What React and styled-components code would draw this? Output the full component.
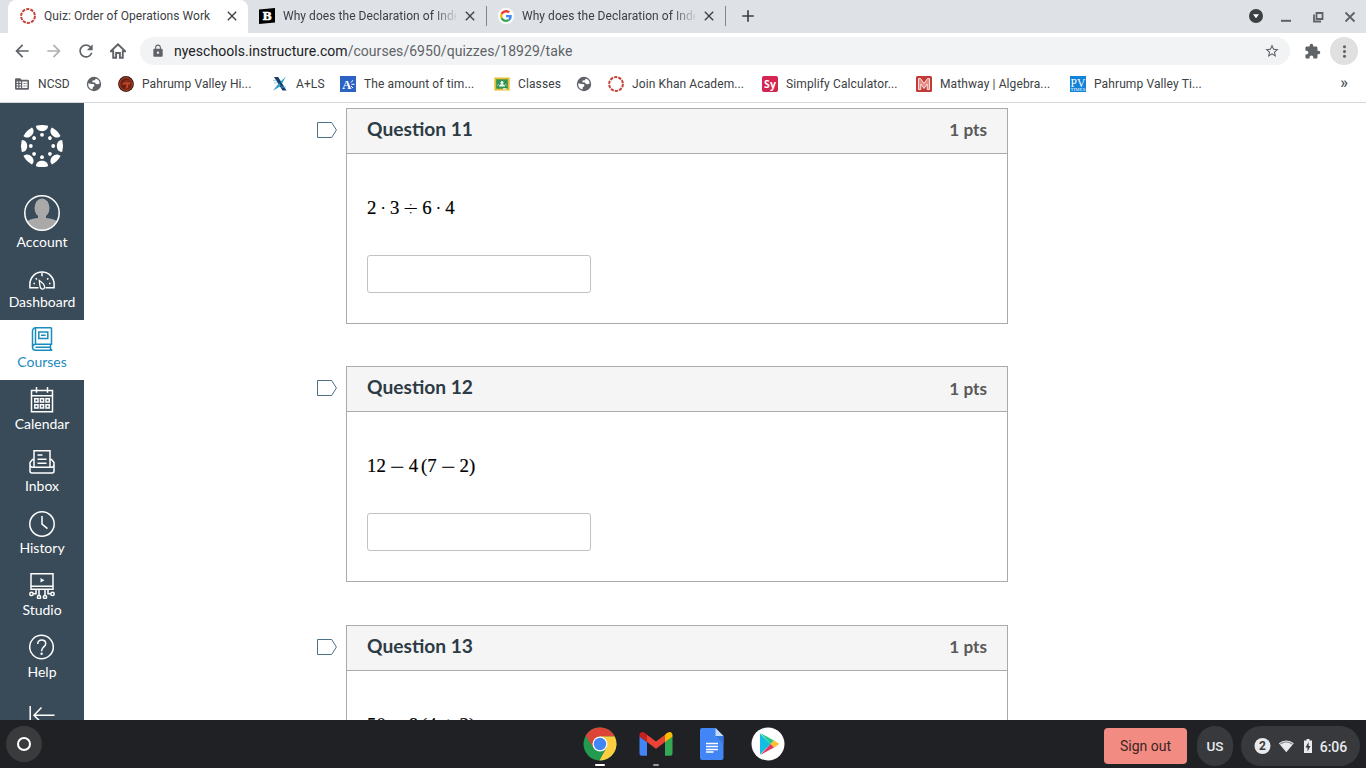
import React from "react";
import styled, { createGlobalStyle } from "styled-components";
import {
  MdAdd,
  MdArrowBack,
  MdArrowForward,
  MdClose,
  MdExtension,
  MdLock,
  MdMoreVert,
  MdRefresh,
  MdStarBorder,
} from "react-icons/md";

const GlobalStyle = createGlobalStyle`
  *, *::after {
    box-sizing: border-box;
  }

  body {
    margin: 0;
    overflow: hidden;
    background: #fff;
    font-family: Roboto, sans-serif;
  }

  svg {
    display: block;
    flex: none;
  }
`;

/* ---------- small icons ---------- */

const RingIcon = () => (
  <svg width="16" height="16" viewBox="0 0 16 16">
    <circle cx="8" cy="8" r="6.900" fill="none" stroke="#c4453c" strokeWidth="2" strokeDasharray="3.300 1.035" />
  </svg>
);

const BrainlyIcon = () => (
  <svg width="16" height="16" viewBox="0 0 16 16">
    <path d="M0 1.600 16 0v14.600L0 16z" fill="#000" />
    <text x="8.200" y="12" fontSize="11" fontWeight="700" fontFamily="DejaVu Serif, serif" textAnchor="middle" fill="#fff" stroke="#fff" strokeWidth=".5">B</text>
  </svg>
);

const GoogleIcon = () => (
  <svg width="16" height="16" viewBox="0 0 16 16">
    <circle cx="8" cy="8" r="8" fill="#fff" />
    <g transform="translate(2 2) scale(.25)">
      <path fill="#EA4335" d="M24 9.500c3.500 0 6.700 1.200 9.200 3.600l6.900-6.900C35.900 2.400 30.500 0 24 0 14.600 0 6.500 5.400 2.600 13.200l8 6.200C12.400 13.700 17.700 9.500 24 9.500z" />
      <path fill="#4285F4" d="M47 24.500c0-1.600-.2-3.100-.4-4.500H24v9h12.900c-.6 3-2.300 5.500-4.800 7.200l7.700 6C44.400 38 47 31.800 47 24.500z" />
      <path fill="#FBBC05" d="M10.500 28.600a14 14 0 0 1 0-9.200l-8-6.200a24 24 0 0 0 0 21.600z" />
      <path fill="#34A853" d="M24 48c6.500 0 11.900-2.100 15.900-5.800l-7.700-6c-2.200 1.500-4.900 2.300-8.200 2.300-6.300 0-11.600-4.200-13.500-9.900l-8 6.200C6.500 42.600 14.600 48 24 48z" />
    </g>
  </svg>
);

const GlobeIcon = () => (
  <svg width="16" height="16" viewBox="0 0 16 16">
    <circle cx="8" cy="8" r="7.200" fill="#5f6368" />
    <path d="M9.800 2.400 8.900 4.200 6.600 4.500 6.200 6.300l2.900.3.700 1.500 2 .1 1.900-.8a5.800 5.800 0 0 0-3.900-5z" fill="#fff" />
    <path d="M2.300 7.300 5.600 8l2.500.3.300 1.700-1.600 1.200-.3 2.400a5.800 5.800 0 0 1-4.200-6.300z" fill="#fff" />
  </svg>
);

const FolderIcon = () => (
  <svg width="16" height="16" viewBox="0 0 16 16">
    <path d="M1 3.400A1.200 1.200 0 0 1 2.200 2.200h4L7.700 3.700h6.100A1.200 1.200 0 0 1 15 4.900v7.700a1.200 1.200 0 0 1-1.200 1.200H2.200A1.200 1.200 0 0 1 1 12.600z" fill="#5f6368" />
    <path d="M2.700 5.600h1.500v1.500H2.700zM2.700 8h1.500v1.500H2.700zM2.700 10.500h1.500V12H2.700zM5.400 5.600h1.500v1.500H5.400zM5.400 8h1.500v1.500H5.400zM5.400 10.500h1.500V12H5.400zM8.200 5.600h5.200V12H8.200z" fill="#fff" />
    <path d="M9.500 6.900h1.300v1.200H9.500zM11.600 6.900h1v1.200h-1zM9.500 9.400h1.300v1.200H9.500zM11.600 9.400h1v1.200h-1z" fill="#5f6368" />
  </svg>
);

const TrojanIcon = () => (
  <svg width="16" height="16" viewBox="0 0 16 16">
    <circle cx="8" cy="8" r="7.900" fill="#3d120c" />
    <circle cx="8" cy="8" r="6.300" fill="#6d1d12" stroke="#b5522b" strokeWidth="1" />
    <path d="M4.500 9.500C4 5 7 3.500 9.500 4c2.500.6 3.500 3 2.500 5l-1.500-.8-.3 3.500-2.700 1.200.8-4.200-1.800-.5z" fill="#b8432a" />
    <path d="M5 6.500C6.500 4.500 9 4.500 11 6" fill="none" stroke="#2a0b07" strokeWidth=".8" />
  </svg>
);

const AlsIcon = () => (
  <svg width="16" height="16" viewBox="0 0 16 16">
    <path d="M2 1h4.200l8.300 13.500h-4z" fill="#173f6b" />
    <path d="M13.800.8 8.600 5.600l1.500 2zM1 14.800 7 7l1.800 3z" fill="#2f9fd0" />
    <path d="M1 4.500h3.500M2 6.800h4M9 11h5" stroke="#6dc0e2" strokeWidth=".7" />
  </svg>
);

const AlgebraIcon = () => (
  <svg width="16" height="16" viewBox="0 0 16 16">
    <path d="M0 0h16v16H0z" fill="#2b62c4" />
    <text x="6.800" y="12.500" fontSize="12.500" fontWeight="700" fontFamily="Liberation Serif, serif" textAnchor="middle" fill="#fff">A</text>
    <path d="m11 6.500 2-2.300M11.500 8.300h3M11 10l2 2" stroke="#fff" strokeWidth="1" />
  </svg>
);

const ClassesIcon = () => (
  <svg width="16" height="16" viewBox="0 0 16 16">
    <path d="M.3 1.500h15.400v13H.3z" fill="#e9bd2c" />
    <path d="M2.200 3.300h11.600v9.400H2.200z" fill="#2f9453" />
    <circle cx="8" cy="6.400" r="1.500" fill="#fff" />
    <path d="M5 10.400c0-1.600 1.500-2.100 3-2.100s3 .5 3 2.100z" fill="#fff" />
    <path d="M3.700 9.800c0-1.200.6-1.600 1.300-1.700M12.300 9.800c0-1.200-.6-1.600-1.300-1.700" stroke="#a9d6b5" fill="none" />
    <path d="M9 12.200h3.500v1.300H9z" fill="#f5f5f5" />
  </svg>
);

const SymbolabIcon = () => (
  <svg width="16" height="16" viewBox="0 0 16 16">
    <rect width="16" height="16" rx="2" fill="#d42450" />
    <text x="8" y="11.500" fontSize="10.500" fontWeight="700" fontFamily="Open Sans, sans-serif" textAnchor="middle" fill="#fff">Sy</text>
  </svg>
);

const MathwayIcon = () => (
  <svg width="16" height="16" viewBox="0 0 16 16">
    <rect width="16" height="16" rx="1.500" fill="#c23a33" />
    <path d="M2.500 13.500v-11h2L8 7.500l3.500-5h2v11h-2.300V8L8 12.500 4.800 8v5.500z" fill="#e98a84" stroke="#fae6e4" strokeWidth="1" />
  </svg>
);

const TimesIcon = () => (
  <svg width="16" height="16" viewBox="0 0 16 16">
    <path d="M0 0h16v16H0z" fill="#1183d8" />
    <text x="8" y="10.800" fontSize="11.500" fontFamily="Liberation Serif, serif" textAnchor="middle" fill="#fff">PV</text>
    <text x="8" y="15.300" fontSize="4.800" fontFamily="Liberation Serif, serif" textAnchor="middle" fill="#fff">TIMES</text>
  </svg>
);

const HomeIcon = () => (
  <svg width="16" height="16" viewBox="0 0 16 16" fill="none" stroke="#5f6368" strokeWidth="1.900">
    <path d="M.8 8.200 8 1.300l7.200 6.900h-2.400v6.600H9.900V10H6.100v4.800H3.200V8.200z" />
  </svg>
);

/* ---------- browser frame ---------- */

const Screen = styled.div`
  display: flex;
  flex-direction: column;
  width: 1366px;
  height: 768px;
  overflow: hidden;
`;

const TabStrip = styled.div`
  display: flex;
  height: 33px;
  flex: none;
  padding-left: 8px;
  background: #dee1e6;
  color: #3c4043;
`;

const TabItem = styled.div`
  display: flex;
  align-items: center;
  width: ${(p) => (p.$active ? 240 : 239)}px;
  height: 33px;
  padding: 0 8px 1px 12px;
  background: ${(p) => (p.$active ? "#fff" : "transparent")};
  border-radius: 8px 8px 0 0;
  margin-left: ${(p) => (p.$shift ? -1 : 0)}px;
`;

const TabTitle = styled.span`
  width: 174px;
  margin: 0 6px 0 8px;
  overflow: hidden;
  white-space: nowrap;
  font-size: 12px;
  line-height: 16px;
  letter-spacing: 0.05px;
  mask-image: ${(p) => (p.$fade ? "linear-gradient(90deg, #000 150px, transparent 176px)" : "none")};
`;

const TabDivider = styled.div`
  width: 1px;
  height: 20px;
  margin: 6px -1px 0 0;
  background: #80868b;
`;

const NewTab = styled.div`
  display: flex;
  align-items: center;
  height: 32px;
  margin-left: 13px;
`;

const WindowControls = styled.div`
  display: flex;
  align-items: center;
  height: 33px;
  margin-left: auto;
  padding-right: 8px;
`;

const Toolbar = styled.div`
  display: flex;
  align-items: center;
  height: 36px;
  flex: none;
  padding: 0 8px 0 12px;
  color: #5f6368;
`;

const NavButton = styled.div`
  display: flex;
  justify-content: center;
  width: 20px;
  margin-right: 12px;
  opacity: ${(p) => (p.$muted ? 0.5 : 1)};
`;

const AddressBar = styled.div`
  display: flex;
  align-items: center;
  width: 1150px;
  height: 28px;
  padding: 0 10px 0 11px;
  border-radius: 14px;
  background: #f1f3f4;
`;

const Url = styled.div`
  margin-left: 9px;
  flex: 1;
  font-size: 14px;
  letter-spacing: 0.04px;
  color: #5f6368;

  span {
    color: #202124;
  }
`;

const Puzzle = styled.div`
  margin-left: 14px;
`;

const MenuButton = styled.div`
  display: flex;
  align-items: center;
  justify-content: center;
  width: 28px;
  height: 28px;
  margin-left: auto;
  border-radius: 50%;
  background: #e0e0e0;
`;

const BookmarkBar = styled.div`
  display: flex;
  align-items: center;
  height: 34px;
  flex: none;
  padding: 0 18px 4px 14px;
  border-bottom: 1px solid #d5d7da;
  color: #3c4043;
  font-size: 12px;
`;

const Bookmark = styled.div`
  display: flex;
  align-items: center;
  gap: 8px;
  width: ${(p) => p.$width}px;
  flex: none;
  white-space: nowrap;
  letter-spacing: 0.11px;
`;

const MoreBookmarks = styled.div`
  margin-left: auto;
  padding-bottom: 2px;
  font-size: 16px;
  font-weight: 500;
  line-height: 14px;
  color: #4a4e52;
`;

const bookmarks = [
  { width: 72, icon: <FolderIcon />, label: "NCSD" },
  { width: 32, icon: <GlobeIcon /> },
  { width: 154, icon: <TrojanIcon />, label: "Pahrump Valley Hi..." },
  { width: 68, icon: <AlsIcon />, label: "A+LS" },
  { width: 154, icon: <AlgebraIcon />, label: "The amount of tim..." },
  { width: 82, icon: <ClassesIcon />, label: "Classes" },
  { width: 32, icon: <GlobeIcon /> },
  { width: 154, icon: <RingIcon />, label: "Join Khan Academ..." },
  { width: 154, icon: <SymbolabIcon />, label: "Simplify Calculator..." },
  { width: 154, icon: <MathwayIcon />, label: "Mathway | Algebra..." },
  { width: 154, icon: <TimesIcon />, label: "Pahrump Valley Ti..." },
];

const BrowserFrame = () => (
  <>
    <TabStrip>
      <TabItem $active>
        <RingIcon />
        <TabTitle>Quiz: Order of Operations Work</TabTitle>
        <MdClose size={16} />
      </TabItem>
      <TabItem $shift>
        <BrainlyIcon />
        <TabTitle $fade>Why does the Declaration of Inde</TabTitle>
        <MdClose size={16} />
      </TabItem>
      <TabDivider />
      <TabItem>
        <GoogleIcon />
        <TabTitle $fade>Why does the Declaration of Inde</TabTitle>
        <MdClose size={16} />
      </TabItem>
      <TabDivider />
      <NewTab>
        <MdAdd size={20} />
      </NewTab>
      <WindowControls>
        <svg width="118" height="33" viewBox="0 0 118 33" fill="none" stroke="#5f6368" strokeWidth="1.800">
          <circle cx="16" cy="16" r="7" fill="#3c4043" stroke="none" />
          <path d="M13 14.200h6L16 18.300z" fill="#fff" stroke="none" />
          <path d="M41 20.800h10" strokeWidth="2" />
          <path d="M76.500 13h6v6h-6zM74 14.500v7h7" />
          <path d="m105.500 12.500 9 9m0-9-9 9" />
        </svg>
      </WindowControls>
    </TabStrip>
    <Toolbar>
      <NavButton><MdArrowBack size={20} /></NavButton>
      <NavButton $muted><MdArrowForward size={20} /></NavButton>
      <NavButton><MdRefresh size={20} /></NavButton>
      <NavButton><HomeIcon /></NavButton>
      <AddressBar>
        <MdLock size={14} />
        <Url><span>nyeschools.instructure.com</span>/courses/6950/quizzes/18929/take</Url>
        <MdStarBorder size={16} />
      </AddressBar>
      <Puzzle><MdExtension size={17} /></Puzzle>
      <MenuButton><MdMoreVert size={19} /></MenuButton>
    </Toolbar>
    <BookmarkBar>
      {bookmarks.map((b, i) => (
        <Bookmark key={i} $width={b.width}>
          {b.icon}
          {b.label}
        </Bookmark>
      ))}
      <MoreBookmarks>»</MoreBookmarks>
    </BookmarkBar>
  </>
);

/* ---------- canvas sidebar ---------- */

const Main = styled.div`
  display: flex;
  height: 617px;
  flex: none;
  overflow: hidden;
`;

const Sidebar = styled.nav`
  width: 84px;
  height: 617px;
  flex: none;
  overflow: hidden;
  background: #394b58;
`;

const LogoBox = styled.div`
  display: flex;
  justify-content: center;
  height: 86px;
  padding-top: 21px;
`;

const NavItem = styled.div`
  display: flex;
  flex-direction: column;
  align-items: center;
  justify-content: flex-end;
  height: ${(p) => p.$height}px;
  padding-bottom: 8px;
  background: ${(p) => (p.$active ? "#fff" : "transparent")};
  color: ${(p) => (p.$active ? "#1b8bbd" : "#fff")};

  svg {
    margin-bottom: ${(p) => p.$gap}px;
    fill: none;
    stroke: currentColor;
    stroke-width: 1.5;
  }
`;

const NavLabel = styled.span`
  font-family: Lato, sans-serif;
  font-size: 14px;
  line-height: 20px;
`;

const Collapse = styled.div`
  display: flex;
  justify-content: center;
  padding-top: 13px;
`;

const angles = [0, 45, 90, 135, 180, 225, 270, 315];

const CanvasLogo = () => (
  <svg width="44" height="44" viewBox="-22 -22 44 44" fill="#fff">
    {angles.map((a) => (
      <g key={a} transform={`rotate(${a})`}>
        <path d="M-6-20.200A21.200 21.200 0 0 1 6-20.200C6-16.500 3-14.800 0-14.800S-6-16.500-6-20.200z" />
        <circle cy="-11.200" r="1.900" />
      </g>
    ))}
  </svg>
);

const AccountIcon = () => (
  <svg width="36" height="36" viewBox="0 0 36 36">
    <defs>
      <clipPath id="avatar"><circle cx="18" cy="18" r="17" /></clipPath>
    </defs>
    <g clipPath="url(#avatar)" stroke="none" fill="#a9a9a9">
      <ellipse cx="18" cy="13" rx="7.500" ry="9.500" />
      <path d="M14 20h8v3c5 .5 11 1.500 13 6v8H1v-8c2-4.500 8-5.500 13-6z" />
    </g>
    <circle cx="18" cy="18" r="17.200" stroke="#fff" />
  </svg>
);

const DashboardIcon = () => (
  <svg width="26" height="24" viewBox="0 0 26 24">
    <path d="M9.500 19.700H.9v-3.500a12.100 12.100 0 0 1 24.200 0v3.500h-8.600" />
    <path d="M13 5v3.200M6.700 10.300l1.200 1.200M19.300 10.300l-1.200 1.200M4.500 15.500H6M20 15.500h1.500" />
    <path d="M10.300 12.500c2.500 1.700 5.500 4.600 5.300 6.700-.2 2.300-3.400 2.500-4.200.4-.5-1.400-.9-4.500-1.100-7.100z" strokeWidth="1.300" />
  </svg>
);

const CoursesIcon = () => (
  <svg width="24" height="24" viewBox="0 0 24 24">
    <path d="M21.500.8H5.500a3 3 0 0 0-3 3v16.400a3 3 0 0 0 3 3h16v-1.200M21.500.8v16.500h-16a3 3 0 0 0-2.900 2.900M20.500 17.300v5.900M5.500.8v16.500" />
    <path d="M8.800 5h9v6.500h-9zM11 8.200h4.600M5.500 20.200H20" />
  </svg>
);

const CalendarIcon = () => (
  <svg width="24" height="26" viewBox="0 0 24 26">
    <path d="M1.500 3.500h21v21.300h-21zM1.500 8.700h21M6.500 0v5.800M17.500 0v5.800" />
    <path d="M4.800 11.800h3.200v3.200H4.800zM10.400 11.800h3.200v3.200h-3.200zM16 11.800h3.200v3.200H16zM4.800 17.800h3.200V21H4.800zM10.400 17.800h3.200V21h-3.200zM16 17.800h3.200V21H16z" />
  </svg>
);

const InboxIcon = () => (
  <svg width="26" height="26" viewBox="0 0 26 26">
    <path d="M5 17.500V1.700h16v15.800M5 10.500H3.500L1 13.500V22a2 2 0 0 0 2 2h20a2 2 0 0 0 2-2v-8.500l-2.500-3H21M1 15.500c0 2 .8 2.700 2.500 2.700h19c1.700 0 2.500-.7 2.500-2.700" />
    <path d="M8.500 6h5M8.500 10.200h9M8.500 14.200h9" />
  </svg>
);

const HistoryIcon = () => (
  <svg width="26" height="26" viewBox="0 0 26 26">
    <circle cx="13" cy="13" r="12.200" />
    <path d="M13 5v8.200l5.500 4.500" />
  </svg>
);

const StudioIcon = () => (
  <svg width="26" height="26" viewBox="0 0 26 26">
    <path d="M2 .8h22v15.500H2zM2 13.200h22" />
    <path d="m11.500 5 4 2.300-4 2.300z" fill="currentColor" stroke="none" />
    <path d="M7 16.500v4.300H4M19 16.500v4.300h3M10 16.500v6M16 16.500v6" />
    <circle cx="2.500" cy="20.900" r="1.700" />
    <circle cx="23.500" cy="20.900" r="1.700" />
    <circle cx="10" cy="24" r="1.600" />
    <circle cx="16" cy="24" r="1.600" />
  </svg>
);

const HelpIcon = () => (
  <svg width="26" height="26" viewBox="0 0 26 26">
    <circle cx="12.500" cy="13" r="11.800" />
    <path d="M8.700 10c0-2.600 1.700-4 4-4s4 1.500 4 3.700c0 3.200-4 3.300-4 6.800v.7" />
    <circle cx="12.600" cy="19.700" r="1.200" fill="currentColor" stroke="none" />
  </svg>
);

const navItems = [
  { label: "Account", height: 71, gap: 1, icon: <AccountIcon /> },
  { label: "Dashboard", height: 60, gap: 0, icon: <DashboardIcon /> },
  { label: "Courses", height: 60, gap: 1, icon: <CoursesIcon />, active: true },
  { label: "Calendar", height: 62, gap: 1, icon: <CalendarIcon /> },
  { label: "Inbox", height: 62, gap: 1, icon: <InboxIcon /> },
  { label: "History", height: 62, gap: 1, icon: <HistoryIcon /> },
  { label: "Studio", height: 62, gap: 1, icon: <StudioIcon /> },
  { label: "Help", height: 62, gap: 2, icon: <HelpIcon /> },
];

const CanvasNav = () => (
  <Sidebar>
    <LogoBox><CanvasLogo /></LogoBox>
    {navItems.map((item) => (
      <NavItem key={item.label} $height={item.height} $gap={item.gap} $active={item.active}>
        {item.icon}
        <NavLabel>{item.label}</NavLabel>
      </NavItem>
    ))}
    <Collapse>
      <svg width="26" height="24" viewBox="0 0 26 24" fill="none" stroke="#fff" strokeWidth="1.500">
        <path d="M1.200 3v19M25.500 12.200H5M12.500 4.500 5 12.200l7.500 7.700" />
      </svg>
    </Collapse>
  </Sidebar>
);

/* ---------- quiz ---------- */

const Quiz = styled.main`
  flex: 1;
  padding: 4.900px 0 0 233px;
`;

const QuestionRow = styled.div`
  display: flex;
  align-items: flex-start;
  margin-bottom: 42.400px;
`;

const Flag = styled.svg`
  margin: 14px 9px 0 0;
`;

const Card = styled.section`
  width: 662px;
  height: 216px;
  border: 1px solid #aaa;
  background: #fff;
`;

const CardHeader = styled.header`
  display: flex;
  align-items: center;
  justify-content: space-between;
  height: 45px;
  padding: 0 20px;
  border-bottom: 1px solid #aaa;
  background: #f5f5f5;
  font-family: Lato, sans-serif;
  font-weight: 700;
`;

const Title = styled.h2`
  margin: 0 0 4px;
  font-size: 19.200px;
  line-height: 24px;
  color: #2d3b45;
`;

const Points = styled.span`
  margin-bottom: 1px;
  font-size: 17.200px;
  line-height: 20px;
  color: #595959;
`;

const Equation = styled.div`
  display: flex;
  align-items: center;
  height: 24px;
  margin: 42px 20px 0;
  font-family: "Liberation Serif", serif;
  font-size: 18.800px;
  line-height: 24px;
  color: #000;
  -webkit-text-stroke: 0.2px #000;
`;

const Operator = styled.span`
  width: ${(p) => (p.$dot ? 13.600 : 22.900)}px;
  padding-top: ${(p) => (p.$dot ? 2 : 0)}px;
  font-family: "DejaVu Sans", sans-serif;
  font-weight: ${(p) => (p.$dot ? 400 : 200)};
  font-size: ${(p) => (p.$dot ? 15 : 19)}px;
  text-align: center;
`;

const Space = styled.span`
  width: 3px;
`;

const AnswerInput = styled.input`
  display: block;
  width: 224px;
  height: 38px;
  margin: 35px 20px 0;
  border: 1px solid #c0c3c6;
  border-radius: 3px;
  background: #fff;
`;

const questions = [
  { title: "Question 11", parts: ["2", "·", "3", "÷", "6", "·", "4"] },
  { title: "Question 12", parts: ["12", "−", "4", " ", "(", "7", "−", "2", ")"] },
  { title: "Question 13", parts: ["50", "−", "8", " ", "(", "4", "+", "2", ")"] },
];

const renderPart = (part, i) => {
  if (part === " ") return <Space key={i} />;
  if ("·÷−+".includes(part)) return <Operator key={i} $dot={part === "·"}>{part}</Operator>;
  return <span key={i}>{part}</span>;
};

const Question = ({ title, parts }) => (
  <QuestionRow>
    <Flag width="20" height="17" viewBox="0 0 20 17" fill="none" stroke="#4c7187">
      <path d="M.5.500h14.200l4.700 7.500-4.700 7.500H.5z" />
    </Flag>
    <Card>
      <CardHeader>
        <Title>{title}</Title>
        <Points>1 pts</Points>
      </CardHeader>
      <Equation>{parts.map(renderPart)}</Equation>
      <AnswerInput type="text" />
    </Card>
  </QuestionRow>
);

/* ---------- chrome os shelf ---------- */

const ShelfBar = styled.footer`
  display: grid;
  grid-template-columns: 1fr auto 1fr;
  align-items: center;
  height: 48px;
  flex: none;
  padding: 0 6px;
  background: #202124;
`;

const Launcher = styled.div`
  display: flex;
  align-items: center;
  justify-content: center;
  width: 36px;
  height: 36px;
  border-radius: 50%;
  background: #3a3b3d;

  &::after {
    content: "";
    width: 14px;
    height: 14px;
    border: 2.500px solid #fff;
    border-radius: 50%;
  }
`;

const Apps = styled.div`
  display: flex;
  gap: 22px;
  margin-left: 2px;
`;

const ShelfApp = styled.div`
  display: flex;
  flex-direction: column;
  align-items: center;
  width: 34px;
  height: 48px;
  padding-top: 7px;
`;

const Running = styled.div`
  width: ${(p) => (p.$focused ? 10 : 6)}px;
  height: 2px;
  margin-top: 3px;
  border-radius: 1px;
  background: ${(p) => (p.$focused ? "#fff" : "#9a9b9d")};
`;

const Tray = styled.div`
  display: flex;
  align-items: center;
  justify-content: flex-end;
  height: 48px;
  padding-top: 4px;
  color: #e8eaed;
`;

const SignOut = styled.button`
  width: 83px;
  height: 36px;
  padding: 0;
  border: 0;
  border-radius: 4px;
  background: #f28b82;
  color: #3c2524;
  font: 400 14px Roboto, sans-serif;
  margin: 0 10px 0 0;
`;

const Pill = styled.div`
  display: flex;
  align-items: center;
  justify-content: center;
  width: ${(p) => p.$width}px;
  height: 40px;
  margin-left: ${(p) => p.$gap || 0}px;
  border-radius: 20px;
  background: #38393c;
  font-size: ${(p) => p.$size}px;
  font-weight: 500;
`;

const Clock = styled.span`
  margin-left: 7px;
  padding-top: 2px;
`;

const ChromeIcon = () => (
  <svg width="34" height="34" viewBox="-17 -17 34 34">
    <circle r="16.500" fill="#249a50" />
    <path d="M-14.300-8.200A16.500 16.500 0 0 1 14.700-7.500H0L-6.500 3.800z" fill="#db4437" />
    <path d="M14.700-7.500A16.500 16.500 0 0 1-.5 16.500L6.500 3.800 0-7.500z" fill="#ffcd40" />
    <circle r="7.500" fill="#fff" />
    <circle r="6.200" fill="#4285f4" />
  </svg>
);

const GmailIcon = () => (
  <svg width="34" height="34" viewBox="0 0 34 34">
    <path d="M.5 9.500v17a2.300 2.300 0 0 0 2.300 2.300H8V15z" fill="#4285f4" />
    <path d="M33.500 9.500v17a2.300 2.300 0 0 1-2.300 2.300H26V15z" fill="#34a853" />
    <path d="M8 7.700 17 14.500l9-6.800V15l-9 6.800L8 15z" fill="#ea4335" />
    <path d="M.5 8.500C.5 4 4.500 3.700 8 7.700V15L.5 9.800z" fill="#c5221f" />
    <path d="M33.500 8.500c0-4.500-4-4.800-7.500-.8V15l7.500-5.200z" fill="#fbbc04" />
  </svg>
);

const DocsIcon = () => (
  <svg width="34" height="34" viewBox="0 0 34 34">
    <path d="M7 1h13.500l8 8v22a2 2 0 0 1-2 2H7a2 2 0 0 1-2-2V3a2 2 0 0 1 2-2z" fill="#4285f4" />
    <path d="M20.500 1v8h8z" fill="#c6dafc" />
    <path d="M20.500 9h8v8z" fill="#3a75db" />
    <path d="M11 16.500h12M11 19.500h12M11 22.500h12M11 25h7.500" stroke="#fff" strokeWidth="1.500" />
  </svg>
);

const PlayIcon = () => (
  <svg width="34" height="34" viewBox="0 0 34 34">
    <circle cx="17" cy="17" r="16.500" fill="#fff" />
    <path d="M9 6.500v21L19.500 17z" fill="#12bfe0" />
    <path d="M9.300 6 23 13.500 19.500 17z" fill="#22c98a" />
    <path d="m23 13.500 5.500 3.500-5.500 3.500-3.500-3.500z" fill="#fdc02f" />
    <path d="M9.300 28 23 20.500 19.500 17z" fill="#e2365c" />
  </svg>
);

const StatusIcons = () => (
  <svg width="59" height="20" viewBox="0 0 59 20" fill="#e8eaed">
    <circle cx="8.500" cy="10" r="8" />
    <text x="8.500" y="14.200" fontSize="12" fontWeight="700" fontFamily="Roboto, sans-serif" textAnchor="middle" fill="#38393c">2</text>
    <path d="M24.800 7.200a11.500 11.500 0 0 1 15 0L32.300 16.200z" />
    <path d="M26 7.500a10.500 10.500 0 0 1 12.600 0l-.8 1a9 9 0 0 0-11 0z" fill="#38393c" opacity=".55" />
    <path d="M52.500 3h3v1.500H58V17h-8V4.500h2.500z" />
    <path d="M54.600 6 51.500 11.500h2v4l3-5.500h-1.900z" fill="#38393c" />
  </svg>
);

const Shelf = () => (
  <ShelfBar>
    <Launcher />
    <Apps>
      <ShelfApp><ChromeIcon /><Running $focused /></ShelfApp>
      <ShelfApp><GmailIcon /><Running /></ShelfApp>
      <ShelfApp><DocsIcon /></ShelfApp>
      <ShelfApp><PlayIcon /></ShelfApp>
    </Apps>
    <Tray>
      <SignOut>Sign out</SignOut>
      <Pill $width={36} $size={13.5}>US</Pill>
      <Pill $width={119} $size={14} $gap={8}>
        <StatusIcons />
        <Clock>6:06</Clock>
      </Pill>
    </Tray>
  </ShelfBar>
);

const App = () => (
  <Screen>
    <GlobalStyle />
    <BrowserFrame />
    <Main>
      <CanvasNav />
      <Quiz>
        {questions.map((q) => (
          <Question key={q.title} {...q} />
        ))}
      </Quiz>
    </Main>
    <Shelf />
  </Screen>
);

export default App;
